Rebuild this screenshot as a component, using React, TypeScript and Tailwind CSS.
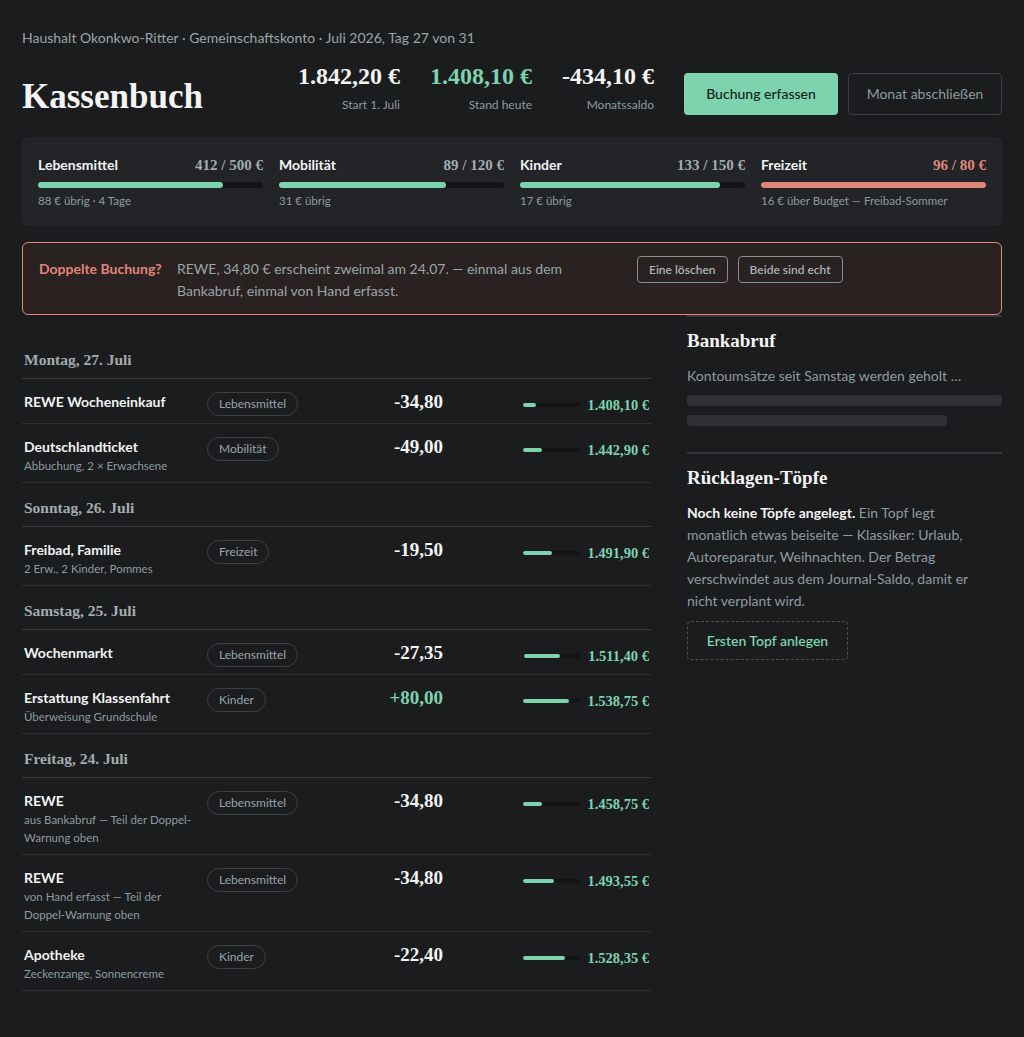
import React from 'react';

type Row = {
    title: string;
    sub?: React.ReactNode;
    tag: string;
    amount: string;
    positive?: boolean;
    balance: string;
    fill: number;
};

type Day = { label: string; rows: Row[] };

const days: Day[] = [
    {
        label: 'Montag, 27. Juli',
        rows: [
            { title: 'REWE Wocheneinkauf', tag: 'Lebensmittel', amount: '-34,80', balance: '1.408,10 €', fill: 13 },
            { title: 'Deutschlandticket', sub: 'Abbuchung, 2 × Erwachsene', tag: 'Mobilität', amount: '-49,00', balance: '1.442,90 €', fill: 19 },
        ],
    },
    {
        label: 'Sonntag, 26. Juli',
        rows: [
            { title: 'Freibad, Familie', sub: '2 Erw., 2 Kinder, Pommes', tag: 'Freizeit', amount: '-19,50', balance: '1.491,90 €', fill: 29 },
        ],
    },
    {
        label: 'Samstag, 25. Juli',
        rows: [
            { title: 'Wochenmarkt', tag: 'Lebensmittel', amount: '-27,35', balance: '1.511,40 €', fill: 36 },
            { title: 'Erstattung Klassenfahrt', sub: 'Überweisung Grundschule', tag: 'Kinder', amount: '+80,00', positive: true, balance: '1.538,75 €', fill: 46 },
        ],
    },
    {
        label: 'Freitag, 24. Juli',
        rows: [
            {
                title: 'REWE',
                sub: (<>aus Bankabruf — Teil der Doppel-<br />Warnung oben</>),
                tag: 'Lebensmittel', amount: '-34,80', balance: '1.458,75 €', fill: 19,
            },
            {
                title: 'REWE',
                sub: (<>von Hand erfasst — Teil der<br />Doppel-Warnung oben</>),
                tag: 'Lebensmittel', amount: '-34,80', balance: '1.493,55 €', fill: 31,
            },
            { title: 'Apotheke', sub: 'Zeckenzange, Sonnencreme', tag: 'Kinder', amount: '-22,40', balance: '1.528,35 €', fill: 42 },
        ],
    },
];

const budgets = [
    { name: 'Lebensmittel', value: '412 / 500 €', pct: 82.4, note: '88 € übrig · 4 Tage' },
    { name: 'Mobilität', value: '89 / 120 €', pct: 74.2, note: '31 € übrig' },
    { name: 'Kinder', value: '133 / 150 €', pct: 88.7, note: '17 € übrig' },
    { name: 'Freizeit', value: '96 / 80 €', pct: 100, note: '16 € über Budget — Freibad-Sommer', over: true },
];

function Stat({ value, label, green }: { value: string; label: string; green?: boolean }) {
    return (
        <div className="flex flex-col items-end">
            <div className={`font-['Liberation_Serif',serif] text-[24px] font-bold leading-7 ${green ? 'text-[#7dd3ae]' : 'text-[#f2f3f3]'}`}>
                {value}
            </div>
            <div className="mt-[7px] text-xs leading-4 text-[#8d9ba0]">{label}</div>
        </div>
    );
}

export default function App() {
    return (
        <div className="min-h-[1037px] bg-[#1b1c1e] px-[22px] pt-7 pb-10 font-['Lato',sans-serif] text-[#e9ecec]">
            <div className="text-sm leading-5 text-[#9aa5a8]">
                Haushalt Okonkwo-Ritter · Gemeinschaftskonto · Juli 2026, Tag 27 von 31
            </div>

            {/* Header */}
            <div className="mt-[14px] flex items-end">
                <h1 className="flex-1 font-['Liberation_Serif',serif] text-[35px] font-bold leading-10 text-[#f4f4f4]">
                    Kassenbuch
                </h1>
                <div className="mb-1 flex gap-[30px]">
                    <Stat value="1.842,20 €" label="Start 1. Juli" />
                    <Stat value="1.408,10 €" label="Stand heute" green />
                    <Stat value="-434,10 €" label="Monatssaldo" />
                </div>
                <div className="mb-0.5 ml-[30px] flex gap-2.5">
                    <button className="h-[42px] w-[154px] rounded bg-[#7dd3ae] text-sm font-medium text-[#16201c]">
                        Buchung erfassen
                    </button>
                    <button className="h-[42px] w-[154px] rounded border border-[#3a3e42] text-sm text-[#8d9ba0]">
                        Monat abschließen
                    </button>
                </div>
            </div>

            {/* Budgets */}
            <div className="mt-5 grid grid-cols-4 gap-4 rounded-md bg-[#222427] px-4 pt-[18px] pb-[17px]">
                {budgets.map(b => (
                    <div key={b.name}>
                        <div className="flex items-center justify-between leading-5">
                            <span className="text-sm font-bold text-[#f2f3f3]">{b.name}</span>
                            <span className={`font-['Liberation_Serif',serif] text-[15px] font-bold ${b.over ? 'text-[#e0857a]' : 'text-[#a3adb0]'}`}>
                                {b.value}
                            </span>
                        </div>
                        <div className="mt-[7px] h-1.5 rounded-full bg-[#131416]">
                            <div
                                className={`h-1.5 rounded-full ${b.over ? 'bg-[#e0857a]' : 'bg-[#7dd3ae]'}`}
                                style={{ width: `${b.pct}%` }}
                            />
                        </div>
                        <div className="mt-[5px] text-[11.5px] leading-4 text-[#8d9ba0]">{b.note}</div>
                    </div>
                ))}
            </div>

            {/* Duplicate warning */}
            <div className="mt-4 flex items-start rounded-md border border-[#e0857a] bg-[#2a2121] px-4 pt-[15px] pb-[12px]">
                <span className="mr-3 w-[126px] shrink-0 text-sm font-bold leading-[22px] text-[#e0857a]">Doppelte Buchung?</span>
                <p className="w-[440px] shrink-0 text-sm leading-[22px] text-[#9aa5a8]">
                    REWE, 34,80 € erscheint zweimal am 24.07. — einmal aus dem
                    <br />
                    Bankabruf, einmal von Hand erfasst.
                </p>
                <div className="ml-5 -mt-0.5 flex gap-2.5">
                    <button className="h-[27px] rounded border border-[#858f93] px-[11px] text-xs font-semibold text-[#a9b3b6]">
                        Eine löschen
                    </button>
                    <button className="h-[27px] rounded border border-[#858f93] px-[11px] text-xs font-semibold text-[#a9b3b6]">
                        Beide sind echt
                    </button>
                </div>
            </div>

            {/* Journal + side */}
            <div className="grid grid-cols-[1fr_315px] gap-9">
                <div className="pt-5">
                    {days.map(day => (
                        <div key={day.label}>
                            <div className="border-b border-[#383b3e] px-0.5 pt-[15px] pb-2 font-['Liberation_Serif',serif] text-[15.5px] font-bold leading-5 text-[#a3abae]">
                                {day.label}
                            </div>
                            {day.rows.map((r, i) => (
                                <div key={i} className="flex items-start border-b border-[#2f3235] px-0.5 pt-[13px] pb-[7px]">
                                    <div className="w-[183px] shrink-0">
                                        <div className="text-sm font-bold leading-5 text-[#f2f3f3]">{r.title}</div>
                                        {r.sub && (
                                            <div className="whitespace-nowrap text-[11.5px] leading-[18px] text-[#8d9ba0]">{r.sub}</div>
                                        )}
                                    </div>
                                    <div className="flex w-[100px] shrink-0">
                                        <span className="flex h-6 items-center rounded-full border border-[#3a3e41] px-[11px] text-xs leading-4 text-[#9aa5a8]">
                                            {r.tag}
                                        </span>
                                    </div>
                                    <div
                                        className={`w-[136px] shrink-0 text-right font-['Liberation_Serif',serif] text-[19px] font-bold leading-5 ${r.positive ? 'text-[#7dd3ae]' : 'text-[#f2f3f3]'}`}
                                    >
                                        {r.amount}
                                    </div>
                                    <div className="mt-[3px] flex flex-1 items-center justify-end gap-2">
                                        <div className="h-1 w-14 rounded-full bg-[#131416]">
                                            <div className="h-1 rounded-full bg-[#7dd3ae]" style={{ width: `${r.fill}px` }} />
                                        </div>
                                        <span className="font-['Liberation_Serif',serif] text-[14.5px] font-bold leading-5 text-[#7dd3ae]">
                                            {r.balance}
                                        </span>
                                    </div>
                                </div>
                            ))}
                        </div>
                    ))}
                </div>

                <div>
                    <section className="border-t-2 border-[#33373a] pt-3">
                        <h2 className="font-['Liberation_Serif',serif] text-[19px] font-bold leading-6 text-[#f4f4f4]">Bankabruf</h2>
                        <p className="mt-3 text-sm leading-[22px] text-[#8d9ba0]">Kontoumsätze seit Samstag werden geholt …</p>
                        <div className="mt-2 h-[11px] w-full rounded-sm bg-[#2e3235]" />
                        <div className="mt-[9px] h-[11px] w-[260px] rounded-sm bg-[#2e3235]" />
                    </section>
                    <section className="mt-[26px] border-t-2 border-[#33373a] pt-3">
                        <h2 className="font-['Liberation_Serif',serif] text-[19px] font-bold leading-6 text-[#f4f4f4]">Rücklagen-Töpfe</h2>
                        <p className="mt-3 text-sm leading-[22px] text-[#8d9ba0]">
                            <strong className="font-bold text-[#f2f3f3]">Noch keine Töpfe angelegt.</strong> Ein Topf legt
                            <br />
                            monatlich etwas beiseite — Klassiker: Urlaub,
                            <br />
                            Autoreparatur, Weihnachten. Der Betrag
                            <br />
                            verschwindet aus dem Journal-Saldo, damit er
                            <br />
                            nicht verplant wird.
                        </p>
                        <button className="mt-[9px] h-[39px] w-[161px] rounded-sm border border-dashed border-[#4a4f53] text-sm font-semibold text-[#7dd3ae]">
                            Ersten Topf anlegen
                        </button>
                    </section>
                </div>
            </div>
        </div>
    );
}
